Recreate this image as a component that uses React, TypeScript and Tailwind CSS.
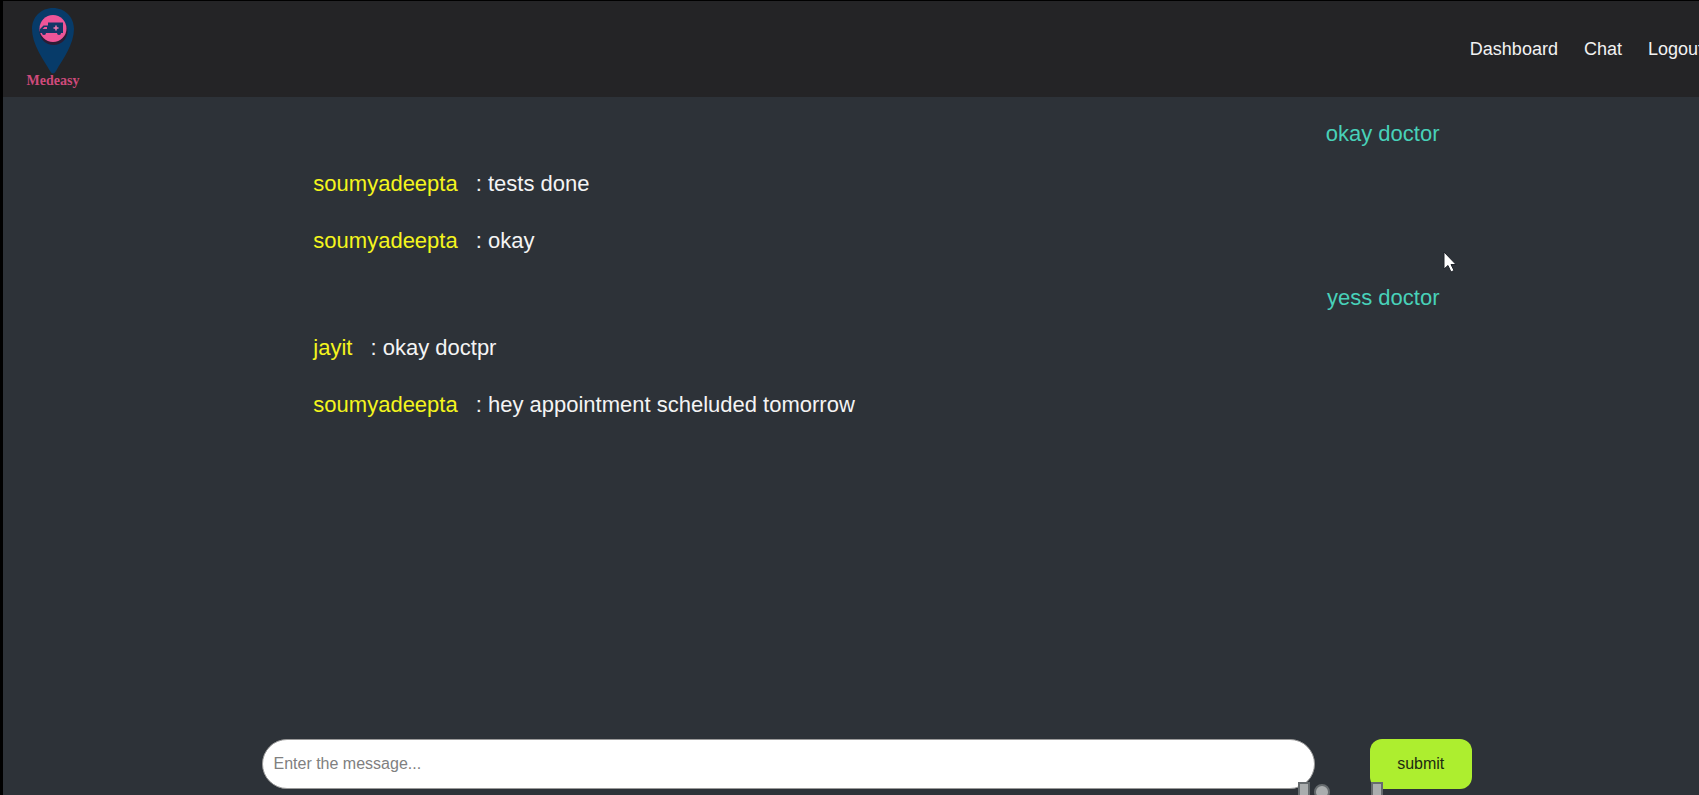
import { useState } from 'react';

interface Message {
  id: number;
  author: string;
  text: string;
  own?: boolean;
}

const NAV_LINKS = [
  { label: 'Dashboard', href: '#dashboard' },
  { label: 'Chat', href: '#chat' },
  { label: 'Logout', href: '#logout' },
];

const MESSAGES: Message[] = [
  { id: 1, author: 'me', text: 'okay doctor', own: true },
  { id: 2, author: 'soumyadeepta', text: 'tests done' },
  { id: 3, author: 'soumyadeepta', text: 'okay' },
  { id: 4, author: 'me', text: 'yess doctor', own: true },
  { id: 5, author: 'jayit', text: 'okay doctpr' },
  { id: 6, author: 'soumyadeepta', text: 'hey appointment scheluded tomorrow' },
];

function Logo() {
  return (
    <a href="#home" aria-label="Medeasy" className="flex shrink-0">
      <svg width="60" height="84" viewBox="0 0 60 84">
        <path d="M30 1C18 1 9 10 9 22C9 37 20 52 27 64Q30 69 33 64C40 52 51 37 51 22C51 10 42 1 30 1Z" fill="#073b69" />
        <circle cx="30.5" cy="24" r="14" fill="#2b1c35" />
        <circle cx="30" cy="21.5" r="13.5" fill="#ee5598" />
        {/* ambulance */}
        <path d="M25 15.500H40V26H17V22L20.500 18.500H25Z" fill="#143767" />
        <circle cx="21" cy="26" r="2" fill="#143767" />
        <circle cx="36" cy="26" r="2" fill="#143767" />
        <path d="M21.500 20H24V22H19.500Z" fill="#ee5598" />
        <path d="M33 18.500V23.500M30.500 21H35.500" stroke="#f27bb0" strokeWidth="1.5" />
        <text x="30" y="78" textAnchor="middle" fill="#cf4a7b" fontSize="14" fontWeight="bold" fontFamily="'Liberation Serif', serif">Medeasy</text>
      </svg>
    </a>
  );
}

function Navbar() {
  return (
    <header className="flex h-24 items-center justify-between overflow-hidden bg-[#242426] pl-5">
      <Logo />
      {/* links run slightly past the right edge of the bar */}
      <nav className="-mr-1 flex gap-[26px] text-lg text-[#f2f2f2]">
        {NAV_LINKS.map(l => (
          <a key={l.label} href={l.href}>{l.label}</a>
        ))}
      </nav>
    </header>
  );
}

function MessageRow({ message }: { message: Message }) {
  if (message.own) {
    return <li className="mb-5 text-right leading-[30px] text-[#48d1b9]">{message.text}</li>;
  }
  return (
    <li className="mb-[27px] flex gap-[18px] leading-[30px]">
      <span className="text-[#f4f51d]">{message.author}</span>
      <span className="text-[#f4f4f4]">: {message.text}</span>
    </li>
  );
}

function MessageForm() {
  const [draft, setDraft] = useState('');

  return (
    <form onSubmit={e => e.preventDefault()} className="mb-[6px] ml-[15.3%] mr-[13.4%] flex gap-[55px]">
      <input
        type="text"
        aria-label="Message"
        value={draft}
        onChange={e => setDraft(e.target.value)}
        placeholder="Enter the message..."
        className="h-[50px] min-w-0 flex-1 rounded-full border border-[#9a9a9a] bg-white px-[10px] text-base text-black placeholder:text-[#808080] focus:outline-none"
      />
      <button type="submit" className="h-[50px] w-[102px] rounded-xl bg-[#adee2f] text-base text-[#1d2b12]">
        submit
      </button>
    </form>
  );
}

function Cursor() {
  return (
    <svg className="pointer-events-none absolute left-[1440px] top-[250px]" width="14" height="22" viewBox="0 0 14 22">
      <path d="M1 1V18L5 14.500L8 21L11 19.500L8 13.500H13Z" fill="#fff" stroke="#20242b" strokeWidth="1" />
    </svg>
  );
}

function Watermark() {
  return (
    <svg className="pointer-events-none absolute bottom-0 left-[1294px]" width="88" height="14" viewBox="0 0 88 14">
      <g fill="#aaadae" stroke="#666b6e" strokeWidth="2">
        <path d="M2 16V2H12V16Z" />
        <path d="M75 16V2H85V16Z" />
        <circle cx="25" cy="11" r="7" />
      </g>
    </svg>
  );
}

export default function App() {
  return (
    <div className="relative flex min-h-screen flex-col overflow-hidden border-l-[3px] border-t border-black bg-[#2d3238] font-['Liberation_Sans',Arial,sans-serif]">
      <Navbar />
      <main className="flex flex-1 flex-col">
        <ul className="ml-[18.3%] mr-[15.3%] flex-1 pt-[22px] text-[22px]">
          {MESSAGES.map(m => (
            <MessageRow key={m.id} message={m} />
          ))}
        </ul>
        <MessageForm />
      </main>
      <Cursor />
      <Watermark />
    </div>
  );
}
